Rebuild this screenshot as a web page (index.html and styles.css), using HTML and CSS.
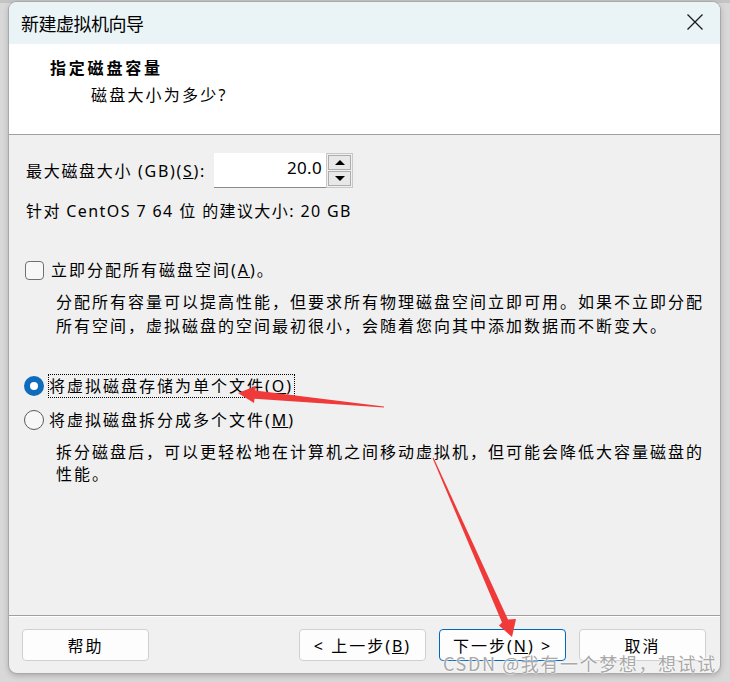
FILE: index.html
```html
<!DOCTYPE html>
<html lang="zh-CN">
<head>
<meta charset="utf-8">
<title>新建虚拟机向导</title>
<link rel="stylesheet" href="styles.css">
</head>
<body>
<div class="window">
  <div class="titlebar">
    <span class="title">新建虚拟机向导</span>
    <svg class="close" width="18" height="18" viewBox="0 0 18 18"><path d="M1.5 1.5 L16.5 16.5 M16.5 1.5 L1.5 16.5" stroke="#1a1a1a" stroke-width="1.3" fill="none"/></svg>
  </div>
  <div class="header">
    <div class="h-title">指定磁盘容量</div>
    <div class="h-sub">磁盘大小为多少?</div>
  </div>
  <div class="content">
    <div class="size-row">
      <span class="lbl">最大磁盘大小 (GB)(<u>S</u>):</span>
      <div class="spin">
        <div class="spin-input">20.0</div>
        <div class="spin-btns">
          <div class="spin-btn"><span class="tri-up"></span></div>
          <div class="spin-btn"><span class="tri-down"></span></div>
        </div>
      </div>
    </div>
    <div class="rec">针对 CentOS 7 64 位 的建议大小: 20 GB</div>
    <div class="check-row">
      <span class="checkbox"></span>
      <span class="opt-label">立即分配所有磁盘空间(<u>A</u>)。</span>
    </div>
    <div class="desc desc1">分配所有容量可以提高性能，但要求所有物理磁盘空间立即可用。如果不立即分配所有空间，虚拟磁盘的空间最初很小，会随着您向其中添加数据而不断变大。</div>
    <div class="radio-row first">
      <span class="radio on"></span>
      <span class="opt-label focus">将虚拟磁盘存储为单个文件(<u>O</u>)</span>
    </div>
    <div class="radio-row second">
      <span class="radio"></span>
      <span class="opt-label">将虚拟磁盘拆分成多个文件(<u>M</u>)</span>
    </div>
    <div class="desc desc2">拆分磁盘后，可以更轻松地在计算机之间移动虚拟机，但可能会降低大容量磁盘的性能。</div>
  </div>
  <div class="footer">
    <button class="btn">帮助</button>
    <div class="spacer"></div>
    <button class="btn">&lt; 上一步(<u>B</u>)</button>
    <button class="btn primary">下一步(<u>N</u>) &gt;</button>
    <button class="btn">取消</button>
  </div>
</div>
<svg class="arrows" width="730" height="682" viewBox="0 0 730 682">
  <polygon fill="#f03a3a" points="238,393 256,386 255.3,390.4 384,406.5 384,407.5 254.5,398.8 254,403"/>
  <polygon fill="#f03a3a" points="512,637 499,625.5 502,622.5 432.6,458.2 433.6,457.8 508,619.5 516,619"/>
</svg>
<div class="watermark">CSDN @我有一个梦想，想试试</div>
</body>
</html>
```

FILE: styles.css
```css
* { box-sizing: border-box; }
html, body { margin: 0; padding: 0; }
body {
  width: 730px;
  height: 682px;
  overflow: hidden;
  background: linear-gradient(#c4c4c4 0, #c4c4c4 3px, #d8d8d8 3px, #d8d8d8 100%);
  font-family: "Noto Sans", "Noto Sans CJK SC", sans-serif;
  font-size: 16px;
  color: #000;
  position: relative;
}
.window {
  position: relative;
  margin: 2px 0 0 9px;
  width: 711px;
  height: 671px;
  border-radius: 8px;
  background: #f0f0f0;
  box-shadow: 0 0 0 1px #a9a9a9, 0 2px 6px rgba(0,0,0,0.25);
  overflow: hidden;
  display: flex;
  flex-direction: column;
}
.titlebar {
  height: 42px;
  background: #eaf4f7;
  display: flex;
  align-items: center;
  justify-content: space-between;
  padding: 0 16px 0 12px;
  flex: none;
}
.title {
  font-family: "Noto Sans CJK SC", sans-serif;
  font-size: 18px;
  letter-spacing: -0.5px;
  line-height: 1;
  margin-top: -1px;
}
.close { display: block; margin-top: -2px; }
.header {
  height: 91px;
  background: #fff;
  border-bottom: 1px solid #a0a0a0;
  padding: 9px 0 0 41px;
  flex: none;
  letter-spacing: 2px;
}
.h-title {
  font-family: "Noto Sans CJK SC", sans-serif;
  font-weight: bold;
  line-height: 28px;
  letter-spacing: 2.8px;
}
.h-sub {
  padding-left: 41px;
  line-height: 28px;
  letter-spacing: 2.2px;
}
.content {
  flex: 1;
  padding: 18px 0 0 0;
  letter-spacing: 2px;
}
.size-row {
  display: flex;
  align-items: center;
  height: 35px;
  padding-left: 17px;
}
.lbl { line-height: 24px; width: 188px; letter-spacing: 1.7px; }
.spin { display: flex; height: 35px; }
.spin-input {
  width: 112px;
  background: #fff;
  border-bottom: 1px solid #8a8a8a;
  text-align: right;
  padding-right: 4px;
  font-size: 17px;
  line-height: 30px;
  letter-spacing: 0.3px;
}
.spin-btns {
  width: 27px;
  display: flex;
  flex-direction: column;
  gap: 1px;
  padding: 1px 1px;
  border: 1px solid #c8c8c8;
  background: #f0f0f0;
}
.spin-btn {
  flex: 1;
  border: 1px solid #adadad;
  background: #e8e8e8;
  display: flex;
  align-items: center;
  justify-content: center;
}
.tri-up, .tri-down { width: 0; height: 0; border-left: 5px solid transparent; border-right: 5px solid transparent; }
.tri-up { border-bottom: 5px solid #000; }
.tri-down { border-top: 5px solid #000; }
.rec {
  margin-top: 11px;
  padding-left: 17px;
  line-height: 24px;
  letter-spacing: 1.4px;
}
.check-row, .radio-row {
  display: flex;
  align-items: center;
  height: 24px;
}
.check-row { margin-top: 35px; padding-left: 16px; }
.checkbox {
  width: 19px;
  height: 19px;
  border: 1px solid #707070;
  border-radius: 4px;
  background: #f7f7f7;
  margin-right: 7px;
  flex: none;
}
.opt-label { line-height: 22px; }
.desc {
  padding-left: 47px;
  padding-right: 14px;
  line-height: 24px;
}
.desc1 { margin-top: 8px; }
.radio-row { padding-left: 15px; }
.radio-row.first { margin-top: 36px; }
.radio-row.second { margin-top: 10px; }
.radio {
  width: 20px;
  height: 20px;
  border-radius: 50%;
  border: 1px solid #5a5a5a;
  background: #f7f7f7;
  margin-right: 5px;
  flex: none;
}
.radio.on {
  border: 6px solid #0f6cbd;
  background: #fff;
}
.focus { outline: 1px dotted #000; outline-offset: 0; padding-right: 1px; }
.desc2 { margin-top: 9px; line-height: 22px; }
.footer {
  flex: none;
  border-top: 1px solid #a0a0a0;
  box-shadow: inset 0 1px 0 #fff;
  padding: 13px 14px 12px 13px;
  display: flex;
  gap: 13px;
}
.spacer { flex: 1; }
.btn {
  width: 127px;
  height: 32px;
  background: #fdfdfd;
  border: 1px solid #d0d0d0;
  border-radius: 4px;
  font-family: "Noto Sans", "Noto Sans CJK SC", sans-serif;
  font-size: 16px;
  letter-spacing: 2px;
  color: #000;
  padding: 0;
}
.btn.primary { border-color: #0067c0; }
.arrows {
  position: absolute;
  left: 0;
  top: 0;
  pointer-events: none;
}
.watermark {
  position: absolute;
  left: 443px;
  top: 651px;
  font-family: "Noto Sans CJK SC", sans-serif;
  font-size: 18px;
  line-height: 24px;
  color: #a8a8a8;
  letter-spacing: 1.6px;
  text-shadow: 0 0 2px #fff, 0 0 2px #fff;
}
```
